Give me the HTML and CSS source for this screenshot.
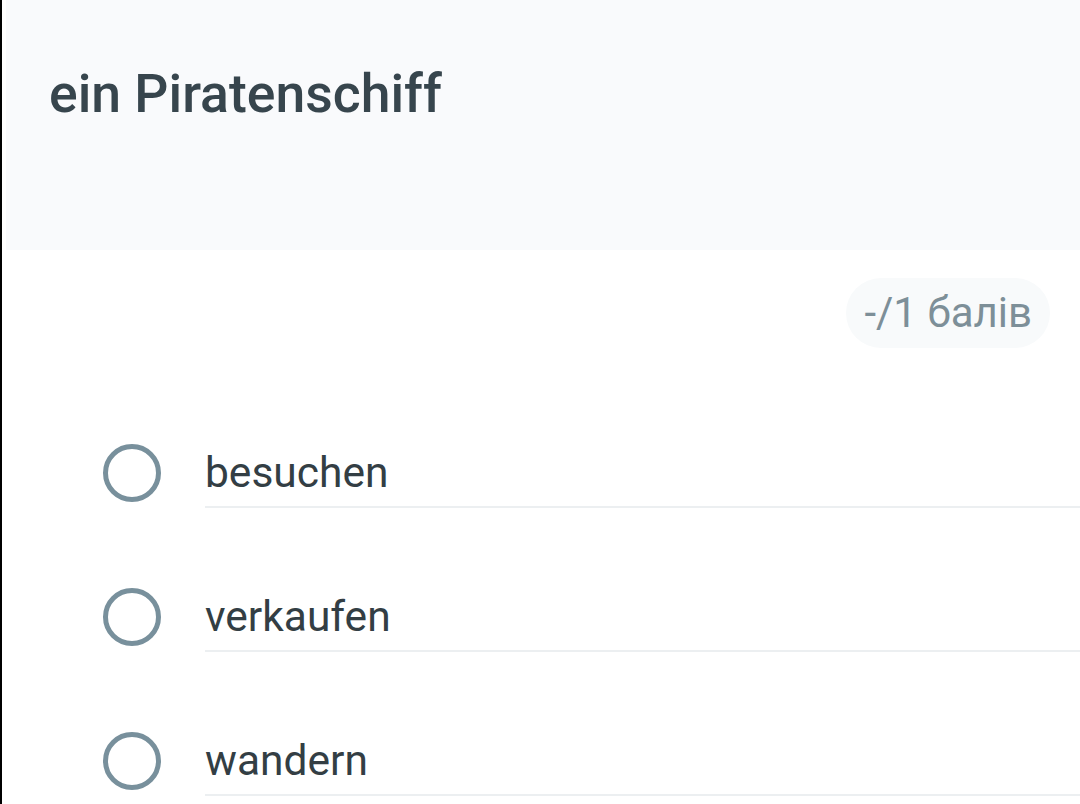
FILE: index.html
```html
<!DOCTYPE html>
<html>
<head>
<meta charset="utf-8">
<link rel="stylesheet" href="styles.css">
</head>
<body>
<div class="page">
  <div class="header">
    <h1 class="title">ein Piratenschiff</h1>
  </div>
  <div class="points-row">
    <span class="points">-/1 балів</span>
  </div>
  <div class="options">
    <div class="option">
      <span class="radio"></span>
      <span class="label">besuchen</span>
    </div>
    <div class="option">
      <span class="radio"></span>
      <span class="label">verkaufen</span>
    </div>
    <div class="option last">
      <span class="radio"></span>
      <span class="label">wandern</span>
    </div>
  </div>
</div>
</body>
</html>
```

FILE: styles.css
```css
html, body {
  margin: 0;
  padding: 0;
  background: #ffffff;
  height: 100%;
  overflow: hidden;
}
body {
  font-family: Roboto, "Noto Sans", "Liberation Sans", sans-serif;
}
.page {
  border-left: 2px solid #000;
  padding-left: 4px;
  height: 100%;
  box-sizing: border-box;
  overflow: hidden;
}
.header {
  background: #f9fafc;
  height: 250px;
  box-sizing: border-box;
  padding: 63px 0 0 43px;
}
.title {
  margin: 0;
  font-size: 53.5px;
  line-height: 62px;
  font-weight: 500;
  color: #37454d;
}
.points-row {
  display: flex;
  justify-content: flex-end;
  padding-right: 30px;
  margin-top: 28px;
}
.points {
  display: inline-block;
  height: 70px;
  line-height: 70px;
  padding: 0 18px;
  border-radius: 35px;
  background: #f8fafb;
  color: #7d8f98;
  font-size: 42px;
}
.options {
  margin-top: 96px;
  padding-left: 97px;
}
.option {
  display: flex;
  align-items: flex-start;
  height: 144px;
}
.option.last {
  height: 66px;
}
.radio {
  width: 48px;
  height: 48px;
  border: 5px solid #78909c;
  border-radius: 50%;
  flex: none;
}
.label {
  flex: 1;
  margin-left: 44px;
  margin-top: 4px;
  font-size: 42.5px;
  line-height: 50px;
  color: #333e44;
  padding-bottom: 8px;
  border-bottom: 2px solid #eceff1;
}
```
